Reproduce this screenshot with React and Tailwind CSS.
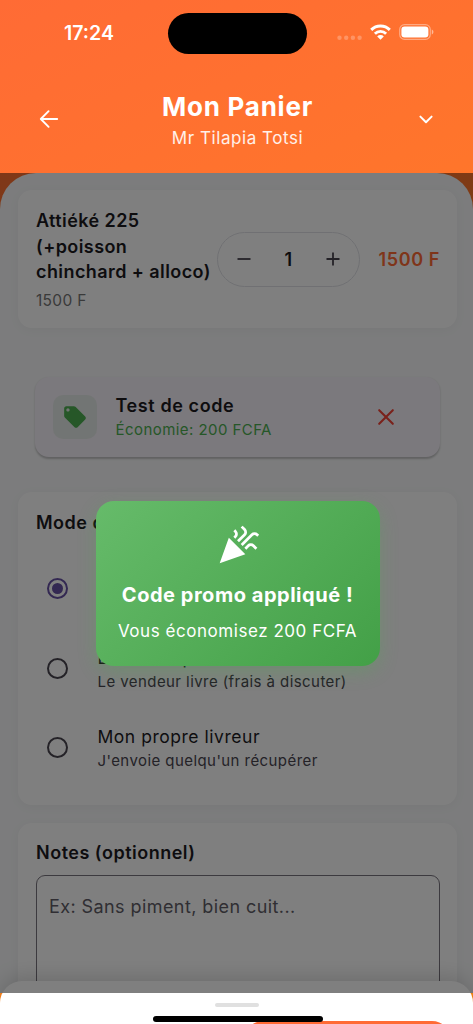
import { useState } from 'react'
import { MdLocalOffer, MdCelebration } from 'react-icons/md'

const deliveryModes = [
  { id: 'pickup', title: 'Retrait sur place', detail: 'Je viens récupérer' },
  { id: 'vendor', title: 'Livraison par vendeur', detail: 'Le vendeur livre (frais à discuter)' },
  { id: 'own', title: 'Mon propre livreur', detail: "J'envoie quelqu'un récupérer" },
]

function StatusBar() {
  return (
    <div className="flex h-[66px] items-center">
      <div className="w-[168px] pl-[64px] pt-[2px] text-[19.5px] font-semibold leading-none">17:24</div>
      <div className="h-[41px] w-[139px] rounded-full bg-black" />
      <div className="flex flex-1 items-center pl-[30px]">
        <svg className="h-4 w-[26px]" viewBox="0 0 26 16" fill="white" fillOpacity="0.25">
          <circle cx="2.5" cy="12.8" r="2.2" />
          <circle cx="9.2" cy="12.8" r="2.2" />
          <circle cx="15.9" cy="12.8" r="2.2" />
          <circle cx="22.6" cy="12.8" r="2.2" />
        </svg>
        <svg className="-mt-[2px] ml-[7px] h-4 w-[21px]" viewBox="0 0 21 16" fill="none" stroke="white" strokeWidth="2.9">
          <path d="M1.2 5.9a13.2 13.2 0 0 1 18.6 0" />
          <path d="M4.9 9.7a8 8 0 0 1 11.2 0" />
          <path d="M7.2 12.4a4.7 4.7 0 0 1 6.6 0L10.5 15.7z" fill="white" stroke="none" />
        </svg>
        <svg className="-mt-[2px] ml-2 h-4 w-[35px]" viewBox="0 0 35 16" fill="none">
          <rect x="0.7" y="0.7" width="30.6" height="14.6" rx="4.8" stroke="white" strokeOpacity="0.4" strokeWidth="1.2" />
          <rect x="2.4" y="2.5" width="27" height="11" rx="3.2" fill="white" />
          <path d="M32.8 5.6c1 .4 1.6 1.3 1.6 2.4s-.6 2-1.6 2.4z" fill="white" fillOpacity="0.5" />
        </svg>
      </div>
    </div>
  )
}

function Header() {
  return (
    <header className="h-[173px] shrink-0 text-white">
      <StatusBar />
      <div className="flex items-center justify-between pl-[39px] pr-[37px] pt-[25px]">
        <button aria-label="Retour">
          <svg className="-mt-[7px] h-5 w-5" viewBox="0 0 20 20" fill="none" stroke="currentColor" strokeWidth="1.9" strokeLinecap="round" strokeLinejoin="round">
            <path d="M18.2 10H2M9.6 2.2 1.8 10l7.8 7.8" />
          </svg>
        </button>
        <div className="flex flex-col items-center">
          <h1 className="text-[26px] font-bold leading-8 tracking-[0.75px]">Mon Panier</h1>
          <p className="text-[17px] leading-[30px] tracking-[0.55px] text-white/90">Mr Tilapia Totsi</p>
        </div>
        <button aria-label="Plus">
          <svg className="-mt-[7px] h-5 w-5" viewBox="0 0 20 20" fill="none" stroke="currentColor" strokeWidth="2" strokeLinecap="round" strokeLinejoin="round">
            <path d="M4.4 7.6 10 13.2l5.6-5.6" />
          </svg>
        </button>
      </div>
    </header>
  )
}

function CartItem() {
  const [qty, setQty] = useState(1)

  return (
    <div className="flex h-[138px] items-center rounded-[14px] bg-white px-[18px] shadow-[0_2px_12px_rgba(0,0,0,0.04)]">
      <div className="w-[180.5px] shrink-0 pt-[2px]">
        <h2 className="whitespace-nowrap text-[18px] font-semibold leading-[25.5px] tracking-[0.42px] text-[#1c1b1f]">
          Attiéké 225
          <br />
          (+poisson
          <br />
          chinchard + alloco)
        </h2>
        <p className="mt-[5px] text-[15.5px] leading-[22px] tracking-[0.3px] text-[#757575]">1500 F</p>
      </div>
      <div className="flex h-[55px] w-[143.5px] shrink-0 items-center justify-between rounded-full border-[1.2px] border-[#e0e1e6] px-[18px]">
        <button aria-label="Moins" onClick={() => setQty(Math.max(1, qty - 1))}>
          <svg className="h-4 w-4" viewBox="0 0 16 16" stroke="#49454f" strokeWidth="1.8">
            <path d="M1.5 8h13" />
          </svg>
        </button>
        <span className="text-[18px] font-semibold text-[#1c1b1f]">{qty}</span>
        <button aria-label="Plus" onClick={() => setQty(qty + 1)}>
          <svg className="h-4 w-4" viewBox="0 0 16 16" stroke="#49454f" strokeWidth="1.8">
            <path d="M1.5 8h13M8 1.5v13" />
          </svg>
        </button>
      </div>
      <div className="-mr-px flex-1 whitespace-nowrap text-right text-[18px] font-semibold tracking-[0.6px] text-[#ff6b35]">1500 F</div>
    </div>
  )
}

function PromoCard() {
  return (
    <div className="mx-[17px] mt-[49px] flex h-[80px] items-center rounded-[14px] bg-[#f7f2fa] pl-[18px] shadow-[0_1.5px_2px_rgba(0,0,0,0.22)]">
      <div className="flex h-[44px] w-[44px] items-center justify-center rounded-[10px] bg-[#4caf50]/10">
        <MdLocalOffer className="h-[26px] w-[26px] text-[#4caf50]" />
      </div>
      <div className="ml-[18.5px] flex-1 pt-[2px]">
        <p className="text-[18px] font-semibold leading-6 tracking-[0.6px] text-[#1c1b1f]">Test de code</p>
        <p className="text-[15px] leading-6 tracking-[0.44px] text-[#4caf50]">Économie: 200 FCFA</p>
      </div>
      <button aria-label="Retirer" className="mr-[45px]">
        <svg className="h-[18px] w-[18px]" viewBox="0 0 18 18" stroke="#f44336" strokeWidth="2.1" strokeLinecap="round">
          <path d="m2.2 2.2 13.6 13.6M15.8 2.2 2.2 15.8" />
        </svg>
      </button>
    </div>
  )
}

function DeliveryCard() {
  const [selected, setSelected] = useState('pickup')

  return (
    <div className="mt-[35px] h-[313px] rounded-[14px] bg-white px-[18px] pt-[18px] shadow-[0_2px_12px_rgba(0,0,0,0.04)]">
      <h2 className="text-[18px] font-semibold leading-[25px] tracking-[0.5px] text-[#1c1b1f]">Mode de livraison</h2>
      <div className="mt-[14px]">
        {deliveryModes.map((mode) => (
          <button
            key={mode.id}
            className="flex h-[79.5px] w-full items-center pl-[11px] text-left"
            onClick={() => setSelected(mode.id)}
          >
            <span
              className={`flex h-[21px] w-[21px] items-center justify-center rounded-full border-2 ${
                selected === mode.id ? 'border-[#6750a4]' : 'border-[#49454f]'
              }`}
            >
              {selected === mode.id && <span className="h-[11px] w-[11px] rounded-full bg-[#6750a4]" />}
            </span>
            <span className="ml-[29.5px] flex flex-col pt-[3px]">
              <span className="text-[17.5px] leading-6 tracking-[0.53px] text-[#1c1b1f]">{mode.title}</span>
              <span className="text-[15px] leading-6 tracking-[0.43px] text-[#49454f]">{mode.detail}</span>
            </span>
          </button>
        ))}
      </div>
    </div>
  )
}

function NotesCard() {
  return (
    <div className="mt-[18px] rounded-[14px] bg-white px-[18px] pb-[18px] pt-[17px] shadow-[0_2px_12px_rgba(0,0,0,0.04)]">
      <h2 className="text-[18px] font-semibold leading-[25px] tracking-[0.5px] text-[#1c1b1f]">Notes (optionnel)</h2>
      <textarea
        className="mt-[10px] block h-[130px] w-[404px] resize-none rounded-[9px] border-[1.2px] border-[#79747e] px-3 py-[17px] text-[18px] leading-7 tracking-[0.42px] placeholder:text-[#605d66]"
        placeholder="Ex: Sans piment, bien cuit..."
      />
    </div>
  )
}

function BottomSheet() {
  return (
    <div className="absolute inset-x-0 bottom-0 h-[43px] overflow-hidden rounded-t-[22px] bg-white shadow-[0_-4px_20px_rgba(0,0,0,0.15)]">
      <div className="mx-auto mt-[21.5px] h-[4.5px] w-[44px] rounded-full bg-[#e0e0e0]" />
      <div className="ml-[244px] mr-[22px] mt-[14px] h-[58px] rounded-[19px] bg-[#ff6b35]" />
    </div>
  )
}

function PromoToast() {
  return (
    <div className="flex h-[165px] w-[284px] flex-col items-center rounded-[18px] bg-[linear-gradient(135deg,#66bb6a,#43a047)] text-white shadow-[0_6px_18px_rgba(76,175,80,0.3)]">
      <MdCelebration className="mt-[22px] h-[44px] w-[44px]" />
      <p className="mt-[15.5px] text-[20px] font-bold leading-[26px] tracking-[0.53px]">Code promo appliqué !</p>
      <p className="mt-[10px] text-[17px] leading-[26px] tracking-[0.55px]">Vous économisez 200 FCFA</p>
    </div>
  )
}

export default function App() {
  return (
    <div className="relative flex h-[1024px] w-[473px] flex-col overflow-hidden bg-[linear-gradient(155.2deg,#ff6b35,#ff8c14)] font-['Inter',sans-serif]">
      <Header />
      <main className="h-[820px] overflow-hidden rounded-t-[36px] bg-[#f8f9fa] pl-[18px] pr-[16px] pt-[17px]">
        <CartItem />
        <PromoCard />
        <DeliveryCard />
        <NotesCard />
      </main>
      <BottomSheet />
      {/* voile sombre et confirmation du code promo */}
      <div className="absolute inset-x-0 top-[173px] flex h-[820px] items-center justify-center bg-black/50 pl-[2px]">
        <PromoToast />
      </div>
      {/* indicateur d'accueil */}
      <div className="absolute bottom-[2px] left-[153px] h-[6px] w-[170px] rounded-full bg-black" />
    </div>
  )
}
